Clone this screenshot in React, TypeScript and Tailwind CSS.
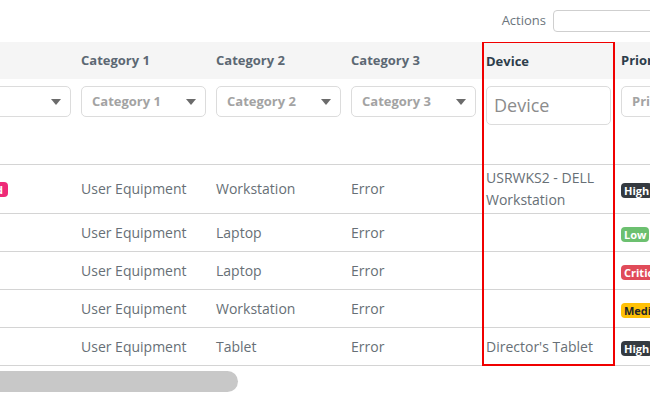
import type { FC } from 'react'

type Row = {
  cat1: string
  cat2: string
  cat3: string
  device: string
  priority: 'High' | 'Low' | 'Critical' | 'Medium'
}

const rows: Row[] = [
  { cat1: 'User Equipment', cat2: 'Workstation', cat3: 'Error', device: 'USRWKS2 - DELL Workstation', priority: 'High' },
  { cat1: 'User Equipment', cat2: 'Laptop', cat3: 'Error', device: '', priority: 'Low' },
  { cat1: 'User Equipment', cat2: 'Laptop', cat3: 'Error', device: '', priority: 'Critical' },
  { cat1: 'User Equipment', cat2: 'Workstation', cat3: 'Error', device: '', priority: 'Medium' },
  { cat1: 'User Equipment', cat2: 'Tablet', cat3: 'Error', device: "Director's Tablet", priority: 'High' }
]

const badgeColors: Record<Row['priority'], string> = {
  High: 'bg-[#343a40] text-white',
  Low: 'bg-[#6cc070] text-white',
  Critical: 'bg-[#e04b59] text-white',
  Medium: 'bg-[#ffc107] text-[#212529]'
}

const Caret = () => (
  <svg width="10" height="6" viewBox="0 0 10 6" className="shrink-0">
    <path d="M0 0h10L5 6z" fill="#6b6b6b" />
  </svg>
)

const Select: FC<{ label: string }> = ({ label }) => (
  <div className="flex h-[31px] items-center justify-between rounded-[5px] border border-[#dcdcdc] bg-white pl-[10px] pr-[9px]">
    <span className="text-[13px] font-bold text-[#a3a3a3]">{label}</span>
    <Caret />
  </div>
)

const cell = 'px-[5px]'
const rowLine = 'border-t border-[#d4d4d4]'

export default function App() {
  return (
    <div className="relative h-[398px] w-[650px] overflow-hidden bg-white font-['Open_Sans',sans-serif]">
      {/* toolbar */}
      <div className="flex h-[42px] items-center justify-end">
        <span className="mr-[7px] text-[13px] text-[#6c757d]">Actions</span>
        <div className="-mr-[30px] h-[22px] w-[127px] rounded-[4px] border border-[#cfcfcf]" />
      </div>

      {/* table, scrolled horizontally */}
      <div className="relative overflow-hidden">
        <div className="-ml-[124px] grid w-max grid-cols-[200px_135px_135px_135px_135px_135px]">
          {/* header */}
          <div className="h-[37px] bg-[#f5f5f5]" />
          {['Category 1', 'Category 2', 'Category 3'].map(h => (
            <div key={h} className={`${cell} flex h-[37px] items-center bg-[#f5f5f5] text-[13px] font-bold text-[#5c6873]`}>
              {h}
            </div>
          ))}
          <div className={`${cell} flex h-[37px] items-center bg-[#f5f5f5] pt-[3px] text-[13px] font-bold text-[#2d3d4b]`}>
            Device
          </div>
          <div className={`${cell} flex h-[37px] items-center bg-[#f5f5f5] text-[13px] font-bold text-[#2d3d4b]`}>
            Priority
          </div>

          {/* filters */}
          {['', 'Category 1', 'Category 2', 'Category 3'].map((f, i) => (
            <div key={i} className={`${cell} h-[85px] pt-[7px]`}>
              <Select label={f} />
            </div>
          ))}
          <div className={`${cell} h-[85px] pt-[7px]`}>
            <div className="flex h-[39px] items-center rounded-[5px] border border-[#dcdcdc] px-[7px] text-[18px] text-[#8c8c8c]">
              Device
            </div>
          </div>
          <div className={`${cell} h-[85px] pt-[7px]`}>
            <Select label="Priority" />
          </div>

          {/* body */}
          {rows.map((r, i) => {
            const h = i === 0 ? 'h-[49px]' : 'h-[38px]'
            const base = `${cell} ${rowLine} ${h} flex items-center text-[14px] leading-[22px] text-[#676f76]`
            return (
              <div key={i} className="contents">
                <div className={`${base} justify-end pr-[68px]`}>
                  {i === 0 && (
                    <span className="rounded-[4px] bg-[#ee2a78] px-[5px] text-[11px] font-bold leading-[15px] text-white">
                      Assigned
                    </span>
                  )}
                </div>
                <div className={base}>{r.cat1}</div>
                <div className={base}>{r.cat2}</div>
                <div className={base}>{r.cat3}</div>
                <div className={`${base} pr-[12px]`}>{r.device}</div>
                <div className={`${base} pt-[3px]`}>
                  <span className={`rounded-[4px] px-[3px] text-[11px] font-bold leading-[15px] ${badgeColors[r.priority]}`}>
                    {r.priority}
                  </span>
                </div>
              </div>
            )
          })}
          {Array.from({ length: 6 }).map((_, i) => (
            <div key={i} className={rowLine} />
          ))}
        </div>

        {/* highlight around the Device column */}
        <div className="pointer-events-none absolute left-[482px] top-[-1px] h-[325px] w-[133px] border-2 border-[#f00000]" />
      </div>

      {/* horizontal scrollbar thumb */}
      <div className="mt-[5px] h-[21px] w-[238px] rounded-r-full bg-[#c8c8c8]" />
    </div>
  )
}
